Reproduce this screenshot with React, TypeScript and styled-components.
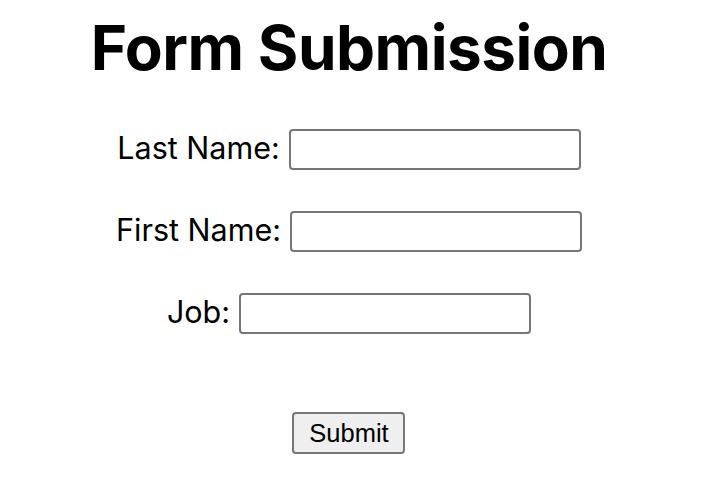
import React from 'react';
import styled, {createGlobalStyle} from 'styled-components';

const GlobalStyle = createGlobalStyle`
  body {
    margin: 8px;
    background: #ffffff;
    color: #000000;
    font-family: Inter, "Noto Sans", sans-serif;
  }
`

const Page = styled.div`
  width: 682px;
  display: flex;
  flex-direction: column;
  align-items: center;
`

const Title = styled.h1`
  margin: 2px 0 0;
  font-family: Inter, sans-serif;
  font-weight: 700;
  font-size: 62px;
  line-height: 76px;
  letter-spacing: -0.5px;
`

const Form = styled.form`
  margin-top: 43px;
  display: flex;
  flex-direction: column;
  align-items: center;
  gap: 41px;
`

const Row = styled.div`
  display: flex;
  align-items: center;
  gap: 9px;
  height: 41px;
`

const Label = styled.label`
  padding-bottom: 4px;
  font-size: 30.5px;
  font-family: Inter, sans-serif;
`

const Input = styled.input`
  box-sizing: border-box;
  width: 292px;
  height: 41px;
  border: 2px solid #767676;
  border-radius: 4px;
  background: #ffffff;
  font-size: 20px;
`

const Button = styled.button`
  margin-top: 37px;
  box-sizing: border-box;
  width: 113px;
  height: 42px;
  border: 2px solid #767676;
  border-radius: 4px;
  background: #efefef;
  font-family: "Liberation Sans", Arial, sans-serif;
  font-size: 25.5px;
  color: #000;
  padding: 0;
`

const fields = [
    {id: 'lastName', label: 'Last Name:'},
    {id: 'firstName', label: 'First Name:'},
    {id: 'job', label: 'Job:'},
]

export default function App() {
    return (
        <Page>
            <GlobalStyle/>
            <Title>Form Submission</Title>
            <Form onSubmit={e => e.preventDefault()}>
                {fields.map(f => (
                    <Row key={f.id}>
                        <Label htmlFor={f.id}>{f.label}</Label>
                        <Input id={f.id} type="text"/>
                    </Row>
                ))}
                <Button type="submit">Submit</Button>
            </Form>
        </Page>
    );
}
